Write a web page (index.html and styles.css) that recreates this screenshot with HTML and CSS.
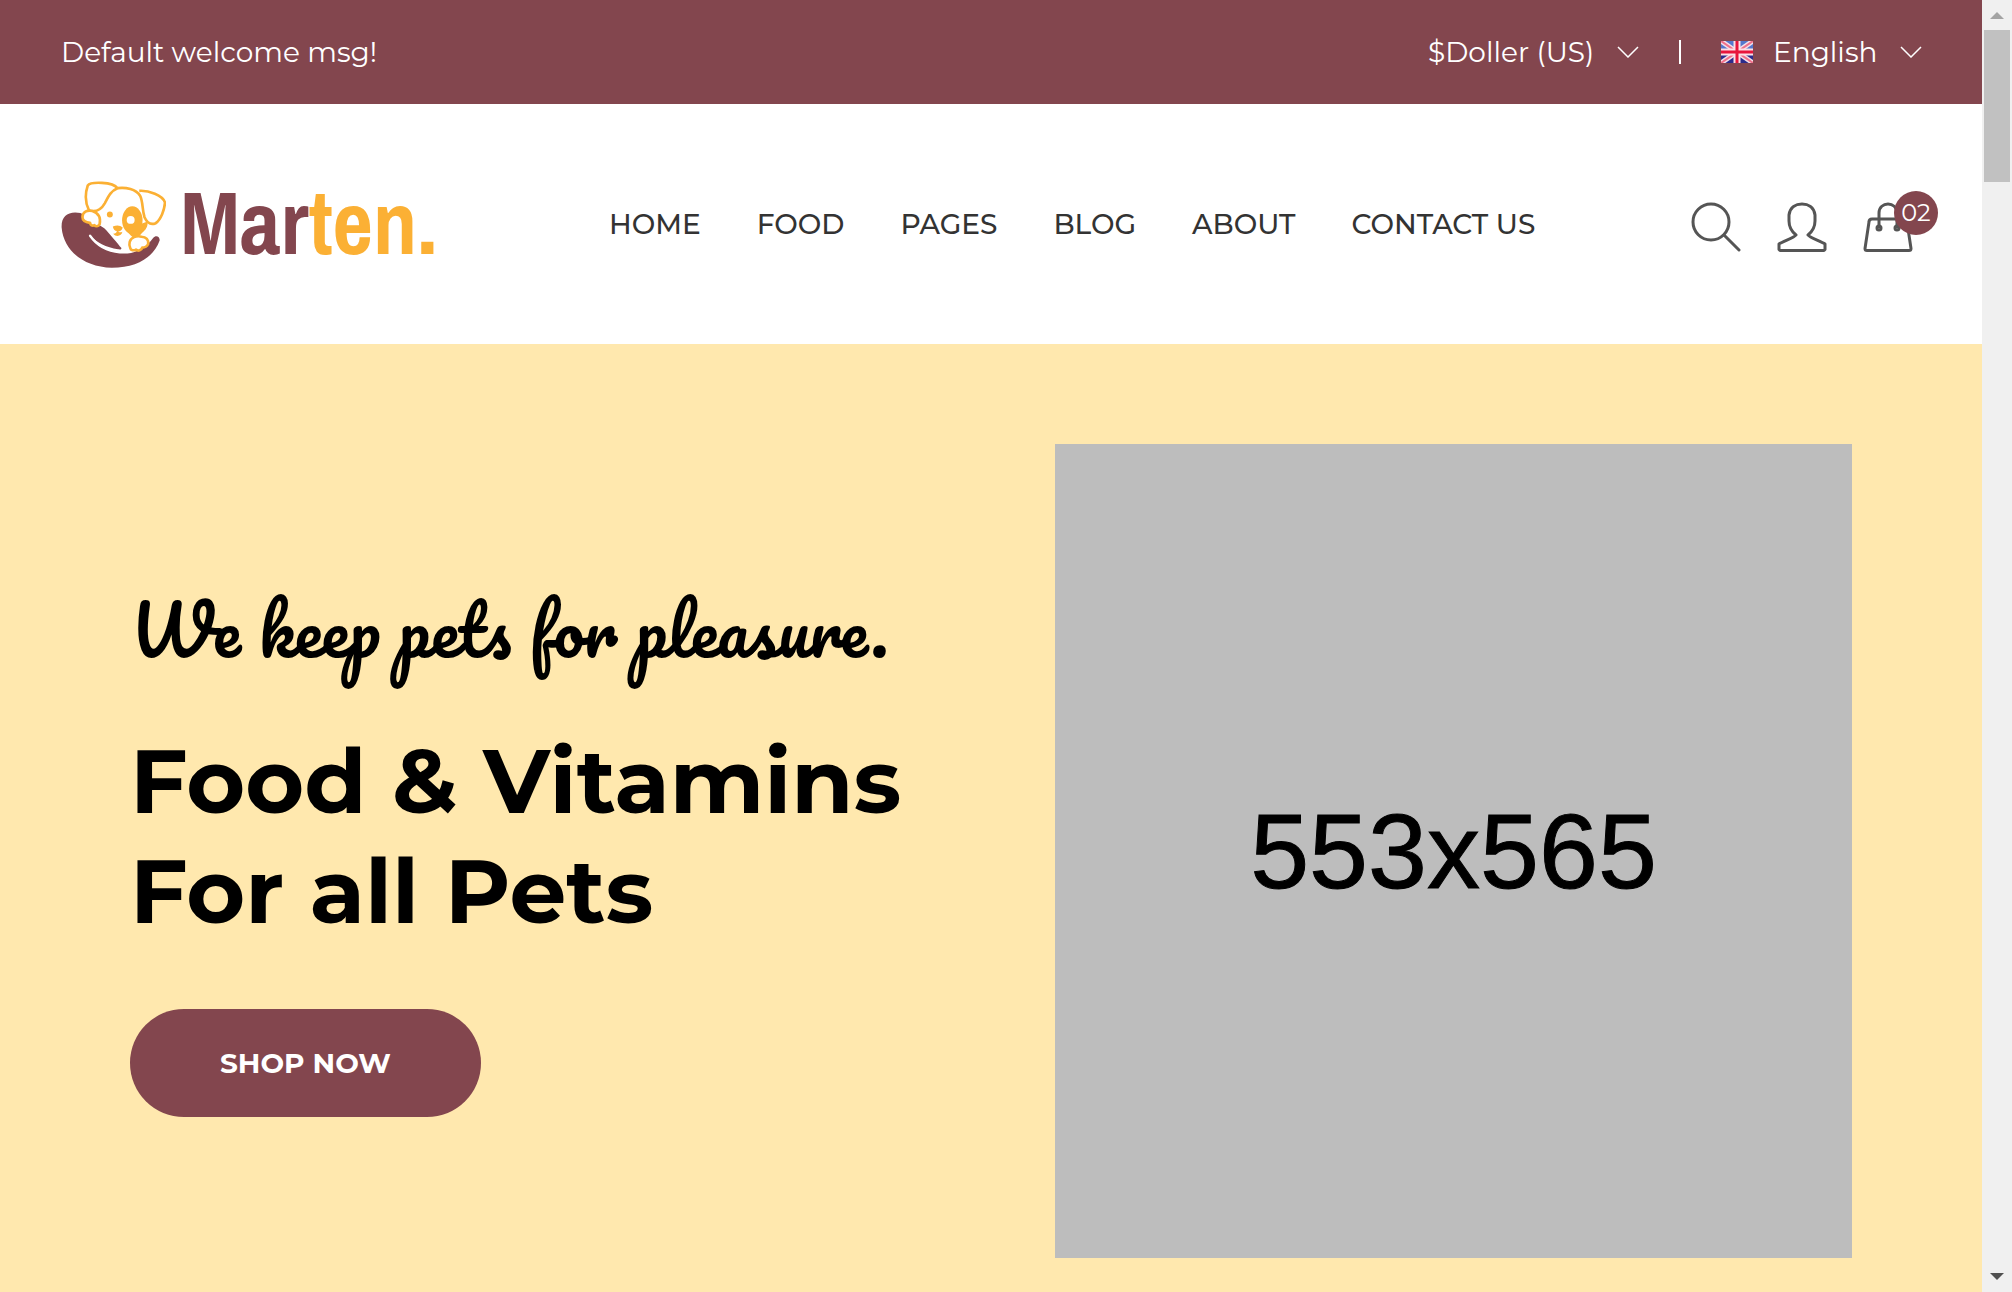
FILE: index.html
```html
<!DOCTYPE html>
<html lang="en">
<head>
<meta charset="utf-8">
<title>Marten - Pet Food</title>
<link rel="stylesheet" href="styles.css">
</head>
<body>
<div class="page">
  <div class="topbar">
    <p class="welcome">Default welcome msg!</p>
    <div class="settings">
      <label class="picker">
        <select class="picker-select currency" aria-label="Currency"><option>$Doller (US)</option></select>
        <svg class="chevron" viewBox="0 0 22 12"><path d="M1 1l10 10L21 1"/></svg>
      </label>
      <span class="divider"></span>
      <label class="picker">
        <svg class="flag" viewBox="0 0 32 22">
          <rect width="32" height="22" fill="#2b2b8c"/>
          <path d="M0 0h32v9H0z" fill="#5577cc"/>
          <path d="M0 0l32 22M32 0L0 22" stroke="#f3dfe8" stroke-width="5"/>
          <path d="M0 0l32 22M32 0L0 22" stroke="#f0708a" stroke-width="2"/>
          <path d="M16 0v22M0 11h32" stroke="#fbdfe6" stroke-width="7"/>
          <path d="M16 0v22M0 11h32" stroke="#e8153c" stroke-width="3"/>
        </svg>
        <select class="picker-select language" aria-label="Language"><option>English</option></select>
        <svg class="chevron" viewBox="0 0 22 12"><path d="M1 1l10 10L21 1"/></svg>
      </label>
    </div>
  </div>

  <header class="header">
    <a class="logo" href="#">
      <svg class="logo-mark" viewBox="62 65 318 260">
        <path d="M64 205C62 175 78 160 105 159c12 0 20 2 28 9l60 38c18 18 40 46 52 60 0 5-4 5-10 4-36-6-66-20-88-44 20 36 56 52 96 54 50 0 76-14 98-44 8-10 20-5 20 7-18 52-70 83-145 83C132 324 70 275 64 205z" fill="#83464e"/>
        <path d="M150 229c24 34 54 47 90 50 24 2 40-2 52-8" fill="none" stroke="#fff" stroke-width="7" stroke-linecap="round"/>
        <ellipse cx="278" cy="182" rx="31" ry="42" fill="#fbb034"/>
        <path d="M258 210l66-24c2 16-6 26-16 34l-18 20c-12-6-22-16-32-30z" fill="#fbb034"/>
        <circle cx="273" cy="181" r="12" fill="#fff"/>
        <circle cx="210" cy="165" r="9" fill="#fbb034"/>
        <path d="M219 201c12-5 22-4 30 3-2 8-8 12-14 12 5 4 9 3 13 1-2 12-18 18-28 6 7 0 11-3 11-8-6-1-11-6-12-14z" fill="#fbb034"/>
        <g fill="none" stroke="#fbb034" stroke-width="8" stroke-linejoin="round">
          <path d="M147 153c-14-28-10-58-4-76 8-12 76-12 90 8-20 8-28 26-38 45-8 14-20 30-48 23z"/>
          <path d="M233 85c26-4 56 4 68 22 10 18 6 42 14 66 8 18 20 24 34 18 16-12 26-40 28-62-6-22-50-38-78-36"/>
          <path fill="#fff" d="M127 172c0-14 14-22 30-18 18 6 26 20 22 40-4 8-12 8-16 3-6 3-13 0-13-7-14-2-23-8-23-18z"/>
          <path fill="#fff" d="M270 248c4-14 20-20 36-16 14 0 22 10 20 22-4 8-10 11-18 11-2 8-12 12-19 6-7 4-16 2-17-4-3-6-4-12-2-19z"/>
        </g>
      </svg>
      <span class="logo-text">Mar<span class="logo-accent">ten.</span></span>
    </a>
    <nav class="nav">
      <a href="#">HOME</a><a href="#">FOOD</a><a href="#">PAGES</a><a href="#">BLOG</a><a href="#">ABOUT</a><a href="#">CONTACT US</a>
    </nav>
    <div class="tools">
      <button class="tool" aria-label="Search"><svg viewBox="0 0 50 50"><circle cx="20" cy="20" r="18"/><path d="M33 33l15 15"/></svg></button>
      <button class="tool" aria-label="Account"><svg viewBox="0 0 50 50"><path d="M19 33C14 29 12 23 12 19v-6C13 5 19 2 25 2s12 3 13 11v6c0 4-2 10-7 14 2 3 13 6 17 9v5.500l-1 1H3l-1-1V42c4-3 15-6 17-9z"/></svg></button>
      <button class="tool" aria-label="Cart"><svg viewBox="0 0 50 50"><path d="M9 17h32q3 0 3 3l4 26.500q0 2-2 2H4q-2 0-2-2L6 20q0-3 3-3zM16 25V11c0-12 18-12 18 0v14"/><circle cx="16" cy="26" r="2"/><circle cx="34" cy="26" r="2"/></svg><span class="badge">02</span></button>
    </div>
  </header>

  <main class="hero">
    <div class="hero-copy">
      <p class="tagline">We keep pets for pleasure.</p>
      <h1 class="headline">Food &amp; Vitamins<br>For all Pets</h1>
      <a class="shop" href="#">SHOP NOW</a>
    </div>
    <div class="hero-image">553x565</div>
  </main>
</div>
<div class="scrollbar">
  <svg class="arrow" viewBox="0 0 14 7"><path d="M0 7l7-7 7 7z" fill="#a3a3a3"/></svg>
  <div class="thumb"></div>
  <svg class="arrow arrow-down" viewBox="0 0 14 7"><path d="M0 0l7 7 7-7z" fill="#505050"/></svg>
</div>
</body>
</html>
```

FILE: styles.css
```css
* { box-sizing: border-box; }
body {
  margin: 0;
  min-height: 100vh;
  display: grid;
  grid-template-columns: 1fr 30px;
  font-family: Montserrat, Inter, sans-serif;
  font-size: 28px;
  color: #333;
}
a { color: inherit; text-decoration: none; }
p, h1 { margin: 0; }
button { border: 0; padding: 0; background: none; font: inherit; }

.page { display: flex; flex-direction: column; }

.topbar {
  height: 104px;
  padding: 0 60px 0 61px;
  display: flex;
  justify-content: space-between;
  align-items: center;
  background: #83464e;
  color: #fff;
  font-weight: 400;
}
.settings { display: flex; align-items: center; gap: 40px; }
.picker { display: flex; align-items: center; gap: 20px; }
.picker-select {
  appearance: none;
  border: 0;
  padding: 0 2px 0 0;
  background: none;
  color: inherit;
  font: inherit;
}
.chevron { width: 22px; height: 12px; fill: none; stroke: #fff; stroke-width: 1.5; }
.divider { width: 2px; height: 24px; background: #fff; }
.flag { width: 32px; height: 22px; }

.header {
  height: 240px;
  padding: 0 69px 0 61px;
  display: flex;
  justify-content: space-between;
  align-items: center;
}
.logo { display: flex; align-items: center; gap: 14px; }
.logo-mark { width: 105px; height: 87px; }
.logo-text {
  font-family: "Pragati Narrow", "PT Sans Narrow", "Open Sans Condensed", "Fira Sans Condensed", "Roboto Condensed", Lato, sans-serif;
  font-weight: 700;
  font-size: 96px;
  line-height: 88px;
  color: #83464e;
}
.logo-accent { color: #fbb034; }
.nav { display: flex; gap: 56px; padding-left: 16px; font-weight: 500; }
.tools { display: flex; gap: 36px; padding-top: 6px; }
.tool { position: relative; width: 50px; height: 50px; }
.tool svg {
  display: block;
  width: 50px;
  height: 50px;
  fill: none;
  stroke: #555;
  stroke-width: 3;
  stroke-linecap: round;
  stroke-linejoin: round;
}
.badge {
  position: absolute;
  top: -11px;
  right: -25px;
  width: 44px;
  height: 44px;
  border-radius: 50%;
  background: #83464e;
  color: #fff;
  font-size: 24px;
  font-weight: 400;
  line-height: 44px;
  text-align: center;
}

.hero {
  flex: 1;
  padding: 100px 130px 34px;
  display: grid;
  grid-template-columns: 1fr 797px;
  align-items: center;
  background: #ffe8ae;
  color: #000;
}
.tagline {
  font-family: Pacifico, "Dancing Script", "Playball", "Lobster", "Liberation Serif", cursive;
  font-weight: 400;
  font-size: 68px;
  line-height: 88px;
}
.headline {
  margin: 53px 0 63px;
  font-size: 90px;
  line-height: 110px;
  font-weight: 700;
}
.shop {
  display: inline-block;
  padding: 0 90px;
  border-radius: 54px;
  background: #83464e;
  color: #fff;
  font-weight: 700;
  line-height: 108px;
}
.hero-image {
  height: 814px;
  display: grid;
  place-items: center;
  background: #bdbdbd;
  font-family: "Liberation Sans", Arial, sans-serif;
  font-size: 106px;
  -webkit-text-stroke: 1px #000;
}

.scrollbar {
  padding: 12px 2px;
  display: flex;
  flex-direction: column;
  align-items: center;
  gap: 11px;
  background: #f0f0f0;
}
.arrow { width: 14px; height: 7px; }
.arrow-down { margin-top: auto; }
.thumb { width: 100%; height: 152px; background: #c1c1c1; }
```
